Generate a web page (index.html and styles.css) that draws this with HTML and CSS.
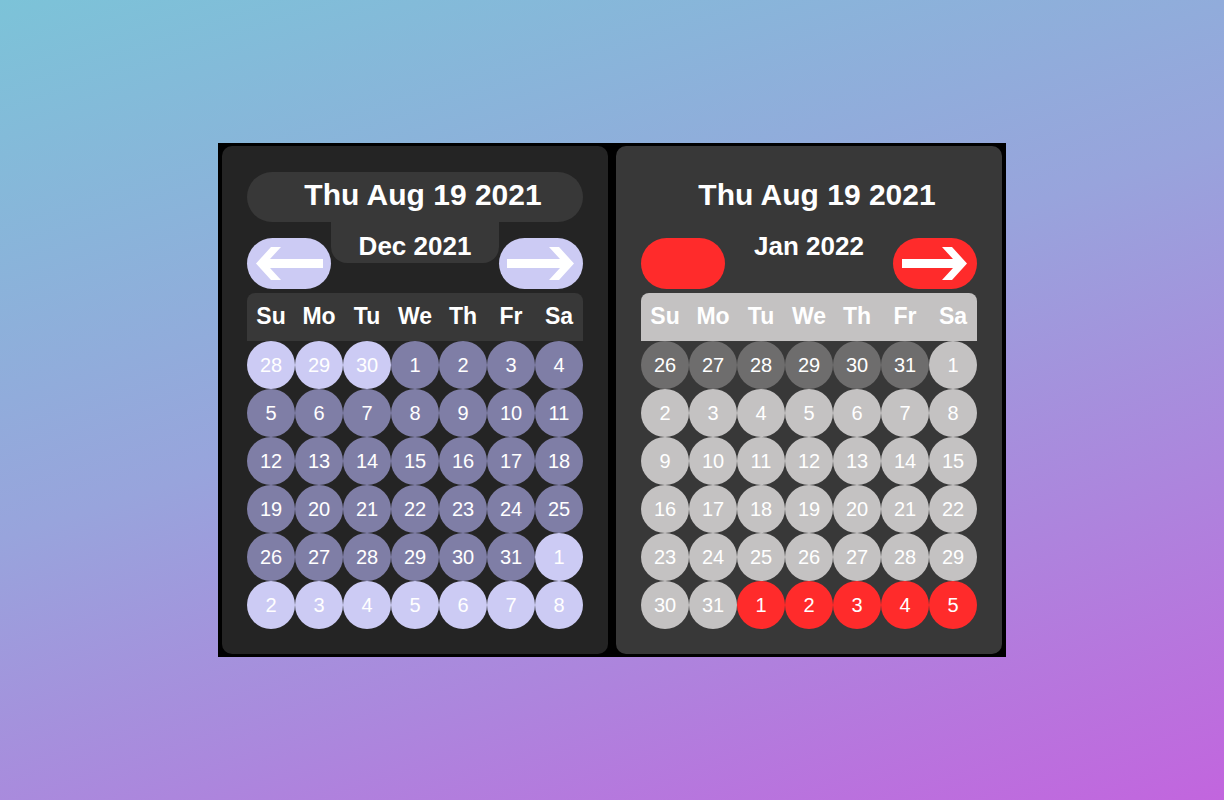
FILE: index.html
```html
<!DOCTYPE html>
<html lang="en">
<head>
    <meta charset="UTF-8">
    <meta name="viewport" content="width=device-width, initial-scale=1.0">
    <title>Calendários</title>
    <link rel="stylesheet" href="styles.css">
</head>
<body>
   <div class="container">

    <div class="calendar calendar-purple">
        <div class="title">Thu Aug 19 2021</div>
        <div class="nav">
            <button class="nav-btn">
                <svg viewBox="0 0 84 51" width="84" height="51"><polygon points="9,25.5 24,9 34,9 23,21 76,21 76,30 23,30 34,42 24,42" fill="#fff"/></svg>
            </button>
            <div class="month">Dec 2021</div>
            <button class="nav-btn">
                <svg viewBox="0 0 84 51" width="84" height="51"><polygon points="75,25.5 60,9 50,9 61,21 8,21 8,30 61,30 50,42 60,42" fill="#fff"/></svg>
            </button>
        </div>
        <div class="weekdays">
            <span>Su</span><span>Mo</span><span>Tu</span><span>We</span><span>Th</span><span>Fr</span><span>Sa</span>
        </div>
        <div class="days">
            <span class="day other">28</span><span class="day other">29</span><span class="day other">30</span>
            <span class="day">1</span><span class="day">2</span><span class="day">3</span><span class="day">4</span>
            <span class="day">5</span><span class="day">6</span><span class="day">7</span><span class="day">8</span><span class="day">9</span><span class="day">10</span><span class="day">11</span>
            <span class="day">12</span><span class="day">13</span><span class="day">14</span><span class="day">15</span><span class="day">16</span><span class="day">17</span><span class="day">18</span>
            <span class="day">19</span><span class="day">20</span><span class="day">21</span><span class="day">22</span><span class="day">23</span><span class="day">24</span><span class="day">25</span>
            <span class="day">26</span><span class="day">27</span><span class="day">28</span><span class="day">29</span><span class="day">30</span><span class="day">31</span>
            <span class="day other">1</span>
            <span class="day other">2</span><span class="day other">3</span><span class="day other">4</span><span class="day other">5</span><span class="day other">6</span><span class="day other">7</span><span class="day other">8</span>
        </div>
    </div>

    <div class="calendar calendar-gray">
        <div class="title">Thu Aug 19 2021</div>
        <div class="nav">
            <button class="nav-btn"></button>
            <div class="month">Jan 2022</div>
            <button class="nav-btn">
                <svg viewBox="0 0 84 51" width="84" height="51"><polygon points="74,25.5 59,9 49,9 60,21 9,21 9,30 60,30 49,42 59,42" fill="#fff"/></svg>
            </button>
        </div>
        <div class="weekdays">
            <span>Su</span><span>Mo</span><span>Tu</span><span>We</span><span>Th</span><span>Fr</span><span>Sa</span>
        </div>
        <div class="days">
            <span class="day prev">26</span><span class="day prev">27</span><span class="day prev">28</span><span class="day prev">29</span><span class="day prev">30</span><span class="day prev">31</span>
            <span class="day">1</span>
            <span class="day">2</span><span class="day">3</span><span class="day">4</span><span class="day">5</span><span class="day">6</span><span class="day">7</span><span class="day">8</span>
            <span class="day">9</span><span class="day">10</span><span class="day">11</span><span class="day">12</span><span class="day">13</span><span class="day">14</span><span class="day">15</span>
            <span class="day">16</span><span class="day">17</span><span class="day">18</span><span class="day">19</span><span class="day">20</span><span class="day">21</span><span class="day">22</span>
            <span class="day">23</span><span class="day">24</span><span class="day">25</span><span class="day">26</span><span class="day">27</span><span class="day">28</span><span class="day">29</span>
            <span class="day">30</span><span class="day">31</span>
            <span class="day next">1</span><span class="day next">2</span><span class="day next">3</span><span class="day next">4</span><span class="day next">5</span>
        </div>
    </div>

   </div>
</body>
</html>
```

FILE: styles.css
```css
body{
    margin: 0;
    min-height: 100vh;
    font-family: "Liberation Sans", Arial, sans-serif;
    background: linear-gradient(162deg, #7cc3d8 0%, #98a4dc 45%, #c265de 100%);
    display: flex;
    align-items: center;
    justify-content: center;
}

.container {
    display: flex;
    gap: 8px;
    padding: 3px 4px;
    background-color: #000;
}

.calendar {
    width: 386px;
    box-sizing: border-box;
    padding: 26px 25px 25px;
    border-radius: 10px;
    color: #fff;
}

.title {
    height: 50px;
    box-sizing: border-box;
    padding: 6px 0 0 16px;
    border-radius: 25px;
    font-size: 30px;
    line-height: 34px;
    font-weight: 700;
    text-align: center;
}

.nav {
    display: flex;
    align-items: flex-start;
}

.nav-btn {
    width: 84px;
    height: 51px;
    margin-top: 16px;
    padding: 0;
    border: none;
    border-radius: 26px;
    display: flex;
}

.month {
    flex: 1;
    height: 41px;
    box-sizing: border-box;
    padding-top: 9px;
    border-radius: 0 0 16px 16px;
    font-size: 26px;
    line-height: 30px;
    font-weight: 700;
    text-align: center;
}

.weekdays {
    display: grid;
    grid-template-columns: repeat(7, 48px);
    height: 48px;
    box-sizing: border-box;
    margin-top: 4px;
    padding-bottom: 2px;
    border-radius: 8px 8px 0 0;
    font-size: 23px;
    line-height: 46px;
    font-weight: 700;
    text-align: center;
}

.days {
    display: grid;
    grid-template-columns: repeat(7, 48px);
    grid-auto-rows: 48px;
}

.day {
    border-radius: 50%;
    font-size: 20px;
    line-height: 48px;
    text-align: center;
}

/* tema roxo */
.calendar-purple {
    background-color: #242424;
}

.calendar-purple .title,
.calendar-purple .month,
.calendar-purple .weekdays {
    background-color: #383838;
}

.calendar-purple .nav-btn,
.calendar-purple .day.other {
    background-color: #cccbf4;
}

.calendar-purple .day {
    background-color: #7f7ea6;
}

/* tema cinza */
.calendar-gray {
    background-color: #383838;
}

.calendar-gray .nav-btn,
.calendar-gray .day.next {
    background-color: #ff2b2b;
}

.calendar-gray .weekdays,
.calendar-gray .day {
    background-color: #c4c2c2;
}

.calendar-gray .day.prev {
    background-color: #6e6d6d;
}
```
